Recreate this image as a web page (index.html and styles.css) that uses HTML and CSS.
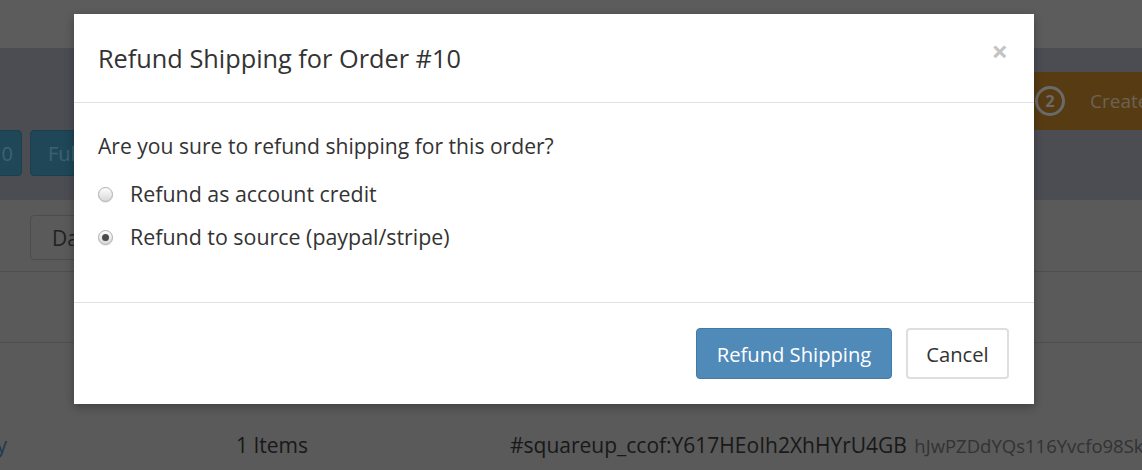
FILE: index.html
```html
<!DOCTYPE html>
<html>
<head>
<meta charset="utf-8">
<link rel="stylesheet" href="styles.css">
</head>
<body>
<div class="page">
  <div class="topbar"></div>
  <div class="band">
    <div class="steps">
      <div class="step-spacer"></div>
      <div class="step">
        <span class="step-num">2</span>
        <span class="step-label">Create</span>
      </div>
    </div>
    <div class="btnrow">
      <span class="tbtn tbtn-first">10</span>
      <span class="tbtn">Fulfill</span>
    </div>
  </div>
  <div class="filters">
    <span class="dbtn">Date</span>
  </div>
  <div class="tablehead"></div>
  <div class="row">
    <span class="c1">Priority</span>
    <span class="c2">1 Items</span>
    <span class="c3">#squareup_ccof:Y617HEoIh2XhHYrU4GB <small>hJwPZDdYQs116Yvcfo98Sk</small></span>
  </div>
</div>

<div class="backdrop"></div>

<div class="modal">
  <div class="modal-header">
    <h4 class="modal-title">Refund Shipping for Order #10</h4>
    <span class="close">&#215;</span>
  </div>
  <div class="modal-body">
    <p class="question">Are you sure to refund shipping for this order?</p>
    <label class="radio"><span class="rdot"></span>Refund as account credit</label>
    <label class="radio"><span class="rdot checked"></span>Refund to source (paypal/stripe)</label>
  </div>
  <div class="modal-footer">
    <span class="btn btn-primary">Refund Shipping</span>
    <span class="btn btn-default">Cancel</span>
  </div>
</div>
</body>
</html>
```

FILE: styles.css
```css
html, body {
  margin: 0;
  padding: 0;
}
body {
  font-family: "Open Sans", "Liberation Sans", sans-serif;
  background: #b4b4b4;
  width: 1142px;
  height: 470px;
  overflow: hidden;
  position: relative;
}
.page {
  width: 1142px;
}
.topbar {
  height: 48px;
  background: #b8b8b8;
}
.band {
  height: 152px;
  background: #979ba6;
  position: relative;
  overflow: hidden;
}
.steps {
  display: flex;
  padding-top: 24px;
  height: 58px;
}
.step-spacer {
  flex: 1;
}
.step {
  width: 130px;
  background: #ae7626;
  display: flex;
  align-items: center;
  padding-left: 23px;
  box-sizing: border-box;
}
.step-num {
  width: 24px;
  height: 24px;
  border: 3px solid #d4d4d4;
  border-radius: 50%;
  color: #d4d4d4;
  font-weight: bold;
  font-size: 16px;
  display: flex;
  align-items: center;
  justify-content: center;
  flex: none;
}
.step-label {
  color: #d8c4a8;
  font-size: 19px;
  margin-left: 25px;
}
.btnrow {
  display: flex;
  gap: 8px;
  margin-left: -28px;
}
.tbtn {
  height: 46px;
  box-sizing: border-box;
  background: #3e8eb0;
  border: 1px solid #367e9c;
  border-radius: 4px;
  color: #78c4e4;
  font-size: 20px;
  display: flex;
  align-items: center;
  padding: 0 17px;
}
.tbtn-first {
  width: 50px;
}
.filters {
  height: 72px;
  border-bottom: 1px solid #9c9c9c;
  padding: 15px 0 0 30px;
  box-sizing: border-box;
}
.dbtn {
  display: inline-flex;
  align-items: center;
  height: 45px;
  box-sizing: border-box;
  border: 1px solid #989898;
  border-radius: 4px;
  padding: 0 21px;
  color: #444;
  font-size: 21px;
}
.tablehead {
  height: 70px;
  border-bottom: 1px solid #9c9c9c;
}
.row {
  display: flex;
  padding-top: 88px;
  font-size: 21px;
  color: #333;
  margin-left: -64px;
  white-space: nowrap;
}
.c1 {
  width: 300px;
  flex: none;
  color: #3f74a4;
}
.c2 {
  width: 274px;
  flex: none;
}
.c3 {
  flex: none;
}
.c3 small {
  font-size: 18.5px;
  color: #666;
  margin-left: 2px;
}

.backdrop {
  position: absolute;
  inset: 0;
  background: rgba(0, 0, 0, 0.5);
}

.modal {
  position: absolute;
  top: 14px;
  left: 74px;
  width: 960px;
  background: #fff;
  box-shadow: 0 3px 9px rgba(0, 0, 0, 0.3);
  color: #333;
}
.modal-header {
  height: 89px;
  box-sizing: border-box;
  border-bottom: 1px solid #e2e2e2;
  display: flex;
  align-items: center;
  justify-content: space-between;
  padding: 0 26px 0 24px;
}
.modal-title {
  margin: 0;
  font-size: 25.3px;
  font-weight: normal;
  color: #333;
}
.close {
  color: #c4c4c4;
  font-size: 29px;
  font-weight: bold;
  margin-top: -16px;
}
.modal-body {
  height: 200px;
  box-sizing: border-box;
  border-bottom: 1px solid #e2e2e2;
  padding: 28px 24px 0 24px;
}
.question {
  margin: 0 0 18px 0;
  font-size: 21.1px;
  line-height: 30px;
}
.radio {
  display: flex;
  align-items: center;
  font-size: 21.4px;
  line-height: 30px;
  margin-bottom: 13px;
}
.rdot {
  width: 15px;
  height: 15px;
  box-sizing: border-box;
  border-radius: 50%;
  border: 1px solid #adadad;
  background: linear-gradient(#fdfdfd, #d8d8d8);
  box-shadow: 0 1px 1px rgba(0, 0, 0, 0.08);
  margin: 0 17px 0 0;
  display: flex;
  align-items: center;
  justify-content: center;
  flex: none;
}
.rdot.checked::after {
  content: "";
  width: 7px;
  height: 7px;
  border-radius: 50%;
  background: #4a4a4a;
}
.modal-footer {
  height: 101px;
  box-sizing: border-box;
  display: flex;
  justify-content: flex-end;
  align-items: center;
  gap: 14px;
  padding: 0 25px;
}
.btn {
  height: 51px;
  box-sizing: border-box;
  display: inline-flex;
  align-items: center;
  justify-content: center;
  font-size: 20.2px;
  border-radius: 4px;
}
.btn-primary {
  width: 196px;
  background: #4f8ab9;
  border: 1px solid #4579a4;
  color: #fff;
}
.btn-default {
  width: 103px;
  background: #fff;
  border: 2px solid #dedede;
  color: #333;
}
```
